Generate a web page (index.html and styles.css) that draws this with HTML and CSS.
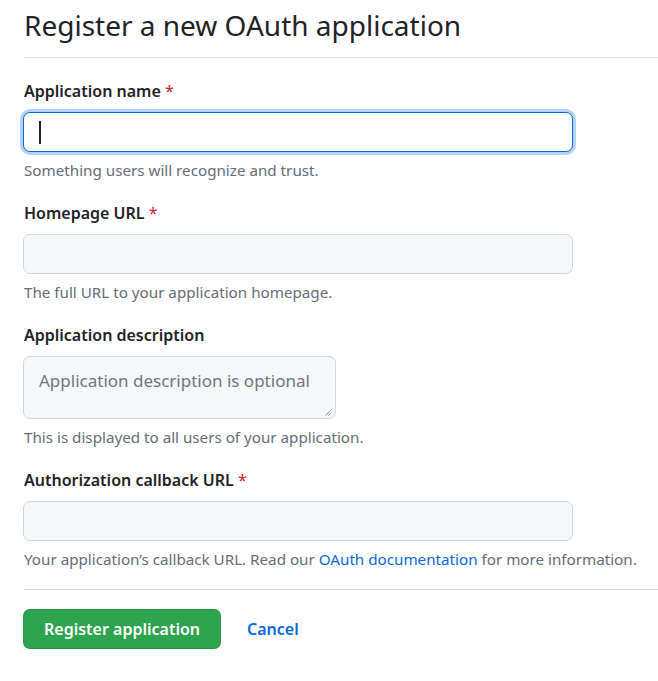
FILE: index.html
```html
<!DOCTYPE html>
<html lang="en">
<head>
<meta charset="utf-8">
<title>Register a new OAuth application</title>
<link rel="stylesheet" href="styles.css">
</head>
<body>
<div class="page">
  <div class="subhead">
    <h1 class="subhead-title">Register a new OAuth application</h1>
  </div>
  <form class="form">
    <div class="group">
      <label class="label">Application name <span class="req">*</span></label>
      <div class="input input-focused"><span class="caret"></span></div>
      <p class="note">Something users will recognize and trust.</p>
    </div>
    <div class="group">
      <label class="label">Homepage URL <span class="req">*</span></label>
      <div class="input"></div>
      <p class="note">The full URL to your application homepage.</p>
    </div>
    <div class="group">
      <label class="label">Application description</label>
      <div class="textarea"><span class="placeholder">Application description is optional</span><svg class="grip" width="8" height="8" viewBox="0 0 8 8"><path d="M7.5 1.5 L1.5 7.5 M7.5 4.5 L4.5 7.5" stroke="#8c959f" stroke-width="1" fill="none"/></svg></div>
      <p class="note">This is displayed to all users of your application.</p>
    </div>
    <div class="group">
      <label class="label">Authorization callback URL <span class="req">*</span></label>
      <div class="input"></div>
      <p class="note">Your application’s callback URL. Read our <a class="link" href="#">OAuth documentation</a> for more information.</p>
    </div>
    <div class="actions">
      <button type="button" class="btn-primary">Register application</button>
      <a class="cancel" href="#">Cancel</a>
    </div>
  </form>
</div>
</body>
</html>
```
FILE: styles.css
```css
* { box-sizing: border-box; }
html, body { margin: 0; padding: 0; background: #ffffff; }
body {
  font-family: "Segoe UI", "Noto Sans", "Liberation Sans", sans-serif;
  color: #1f2328;
}
.page { padding-left: 24px; }
.subhead {
  border-bottom: 1px solid #d8dee4;
  padding-top: 6px;
  height: 58px;
}
.subhead-title {
  margin: 0;
  font-size: 28px;
  font-weight: 400;
  line-height: 38px;
}
.form { padding-top: 22px; }
.group { padding-bottom: 22px; }
.label {
  display: block;
  font-size: 16px;
  font-weight: 600;
  line-height: 22px;
  margin-bottom: 10px;
}
.req { color: #cf222e; font-weight: 400; }
.input {
  width: 550px;
  height: 40px;
  margin-left: -1px;
  background: #f6f8fa;
  border: 1px solid #d0d7de;
  border-radius: 7px;
}
.input-focused {
  background: #ffffff;
  border-color: #0969da;
  box-shadow: 0 0 0 3px rgba(9, 105, 218, 0.3);
  display: flex;
  align-items: center;
  padding-left: 15px;
}
.caret {
  display: block;
  width: 2px;
  height: 23px;
  background: #1f2328;
}
.textarea {
  width: 313px;
  height: 63px;
  margin-left: -1px;
  background: #f6f8fa;
  border: 1px solid #d0d7de;
  border-radius: 7px;
  padding: 12px 15px;
  display: flex;
  justify-content: space-between;
  align-items: flex-start;
}
.placeholder {
  font-size: 17px;
  line-height: 24px;
  color: #6e7781;
  white-space: nowrap;
}
.grip { align-self: flex-end; margin: 0 -12px -10px 0; }
.note {
  margin: 8px 0 0;
  font-size: 15.2px;
  line-height: 20px;
  color: #656d76;
}
.link, .cancel { color: #0969da; text-decoration: none; }
.actions {
  border-top: 1px solid #d0d7de;
  margin-top: -2px;
  padding-top: 19px;
  display: flex;
  align-items: center;
  gap: 26px;
}
.btn-primary {
  height: 40px;
  margin-left: -1px;
  padding: 0 20px;
  background: #2da44e;
  color: #ffffff;
  border: 1px solid rgba(31, 35, 40, 0.15);
  border-radius: 7px;
  font-family: inherit;
  font-size: 16px;
  font-weight: 600;
}
.cancel { font-size: 16px; font-weight: 600; }
```
